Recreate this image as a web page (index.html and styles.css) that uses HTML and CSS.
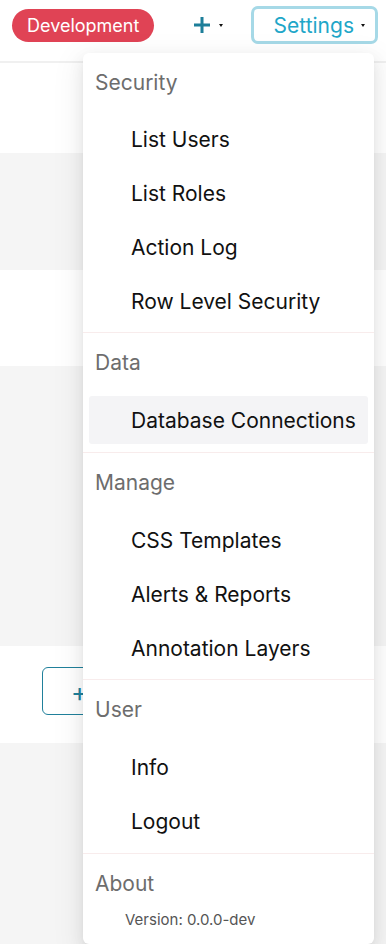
FILE: index.html
```html
<!DOCTYPE html>
<html lang="en">

<head>
    <meta charset="UTF-8">
    <meta name="viewport" content="width=device-width, initial-scale=1.0">
    <title>Settings menu</title>
    <link rel="stylesheet" href="styles.css">
</head>

<body>
    <header class="navbar">
        <span class="env-badge">Development</span>
        <div class="nav-right">
            <button class="new-btn">
                <svg width="18" height="18" viewBox="0 0 18 18">
                    <path d="M9 1v16M1 9h16" stroke="#1d7e99" stroke-width="3" />
                </svg>
                <span class="caret"></span>
            </button>
            <button class="settings-btn">Settings <span class="caret"></span></button>
        </div>
    </header>

    <!-- page behind the dropdown -->
    <main class="page">
        <div class="band white" style="height: 90px"></div>
        <div class="band" style="height: 117px"></div>
        <div class="band white" style="height: 96px"></div>
        <div class="band" style="height: 280px"></div>
        <div class="band white add-row" style="height: 97px">
            <button class="add-btn">+</button>
        </div>
        <div class="band" style="height: 200px"></div>
    </main>

    <div class="dropdown">
        <div class="group">
            <div class="group-title">Security</div>
            <ul class="items">
                <li>List Users</li>
                <li>List Roles</li>
                <li>Action Log</li>
                <li>Row Level Security</li>
            </ul>
        </div>
        <div class="group">
            <div class="group-title">Data</div>
            <ul class="items">
                <li class="active">Database Connections</li>
            </ul>
        </div>
        <div class="group">
            <div class="group-title">Manage</div>
            <ul class="items">
                <li>CSS Templates</li>
                <li>Alerts &amp; Reports</li>
                <li>Annotation Layers</li>
            </ul>
        </div>
        <div class="group">
            <div class="group-title">User</div>
            <ul class="items">
                <li>Info</li>
                <li>Logout</li>
            </ul>
        </div>
        <div class="group">
            <div class="group-title">About</div>
            <div class="version">Version: 0.0.0-dev</div>
        </div>
    </div>
</body>

</html>
```

FILE: styles.css
```css
body {
    margin: 0;
    font-family: "Inter", "Liberation Sans", sans-serif;
    color: #111111;
    background-color: #f5f5f5;
    overflow: hidden;
}

button {
    font-family: inherit;
    cursor: pointer;
}

.navbar {
    height: 63px;
    background-color: #ffffff;
    border-bottom: 2px solid #f0f0f0;
    display: flex;
    align-items: center;
    justify-content: space-between;
    padding: 0 8px 0 12px;
    box-sizing: border-box;
}

.env-badge {
    background-color: #e04355;
    color: #ffffff;
    font-size: 18px;
    border-radius: 17px;
    height: 33px;
    line-height: 33px;
    padding: 0 15px;
    margin-top: -11px;
}

.nav-right {
    display: flex;
    align-items: center;
    gap: 28px;
    margin-top: -11px;
}

.caret {
    display: inline-block;
    width: 0;
    height: 0;
    border-left: 2px solid transparent;
    border-right: 2px solid transparent;
    border-top: 3px solid #111111;
    vertical-align: middle;
}

.new-btn {
    border: none;
    background: transparent;
    padding: 0;
    display: flex;
    align-items: center;
    gap: 8px;
}

.settings-btn {
    border: 3px solid #a6d9e7;
    border-radius: 7px;
    background: #ffffff;
    color: #20a6c8;
    font-size: 21px;
    height: 38px;
    padding: 0 10px 0 20px;
    display: flex;
    align-items: center;
    gap: 7px;
}

.page {
    display: flex;
    flex-direction: column;
}

.band {
    background-color: #f5f5f5;
}

.band.white {
    background-color: #ffffff;
}

.add-row {
    padding: 21px 0 0 42px;
    box-sizing: border-box;
}

.add-btn {
    width: 80px;
    height: 48px;
    border: 1px solid #20809b;
    border-radius: 6px;
    background: #ffffff;
    color: #20809b;
    font-size: 26px;
    text-align: left;
    padding-left: 28px;
}

.dropdown {
    position: absolute;
    left: 83px;
    top: 53px;
    width: 291px;
    background-color: #ffffff;
    border-radius: 6px;
    padding: 4px 0;
    box-shadow: 0 3px 6px -4px rgba(0, 0, 0, 0.12), 0 6px 16px 0 rgba(0, 0, 0, 0.08), 0 9px 28px 8px rgba(0, 0, 0, 0.05);
}

.group + .group {
    border-top: 1px solid #f8ecec;
    padding-top: 4px;
}

.group-title {
    height: 50px;
    line-height: 51px;
    padding-left: 12px;
    font-size: 21px;
    color: #6d6d6d;
}

.items {
    list-style: none;
    margin: 0;
    padding: 8px 6px 7px;
    display: flex;
    flex-direction: column;
    gap: 6px;
}

.group + .group .items {
    padding-top: 9px;
    padding-bottom: 7.5px;
}

.items li {
    height: 48px;
    line-height: 50px;
    padding-left: 42px;
    font-size: 21px;
    border-radius: 3px;
}

.items li.active {
    background-color: #f4f4f6;
}

.version {
    padding: 0 0 8px 42px;
    font-size: 15px;
    line-height: 24px;
    color: #555555;
}
```
